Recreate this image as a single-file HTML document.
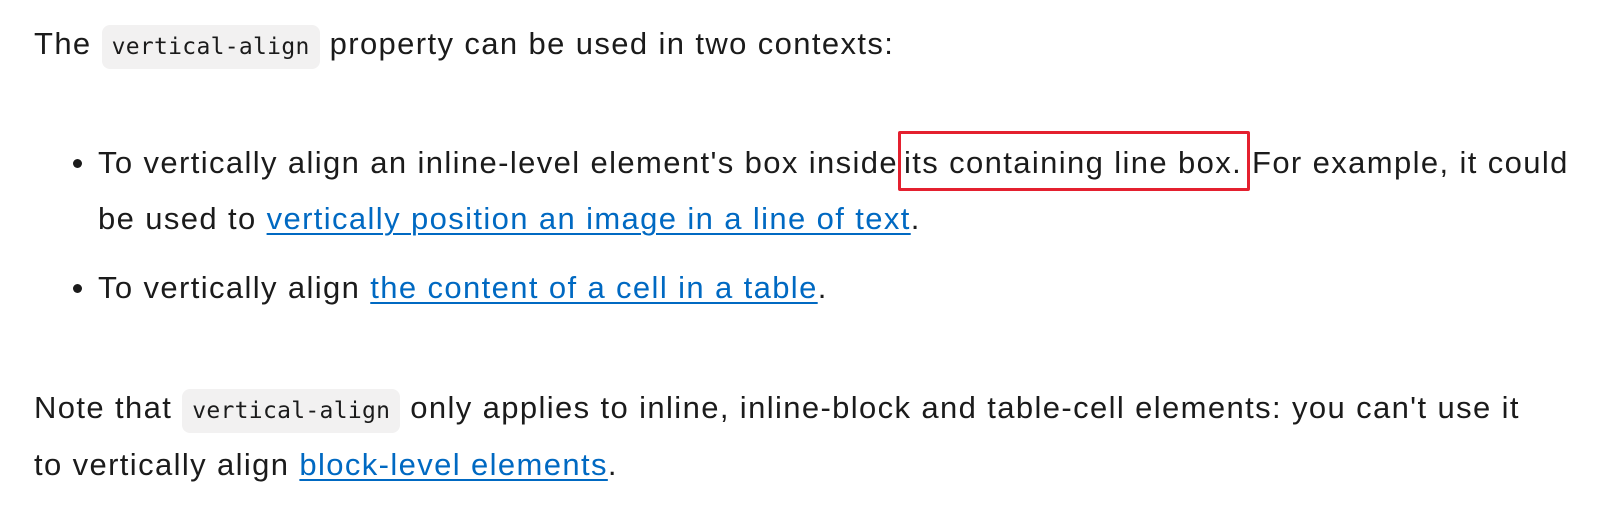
<!DOCTYPE html>
<html><head><meta charset="utf-8"><style>
body{margin:0;width:1621px;height:514px;background:#fff;position:relative;overflow:hidden;font-family:"Liberation Sans","DejaVu Sans",sans-serif;font-size:31px;letter-spacing:1.38px;color:#1b1b1b}
.t{position:absolute;white-space:nowrap;line-height:40px}
a{color:#0069c2;text-decoration:underline;text-underline-offset:4px;text-decoration-thickness:2px}
code{font-family:"DejaVu Sans Mono","Liberation Mono",monospace;font-size:23px;letter-spacing:0.3px;background:#f2f1f1;border-radius:8px;padding:9px 10px}
.dot{position:absolute;width:9px;height:9px;border-radius:50%;background:#1b1b1b}
.box{position:absolute;border:3px solid #e4202f;border-radius:2px}
</style></head><body>
<div class="t" style="left:34px;top:24px">The <code>vertical-align</code> property can be used in two contexts:</div>

<div class="dot" style="left:73px;top:159px"></div>
<div class="t" style="left:98px;top:143px">To vertically align an inline-level element's box inside</div>
<div class="box" style="left:898px;top:131px;width:346px;height:54px"></div>
<div class="t" style="left:904px;top:143px">its containing line box.</div>
<div class="t" style="left:1252px;top:143px">For example, it could</div>
<div class="t" style="left:98px;top:199px">be used to <a>vertically position an image in a line of text</a>.</div>

<div class="dot" style="left:73px;top:284px"></div>
<div class="t" style="left:98px;top:268px">To vertically align <a>the content of a cell in a table</a>.</div>

<div class="t" style="left:34px;top:388px">Note that <code>vertical-align</code> only applies to inline, inline-block and table-cell elements: you can't use it</div>
<div class="t" style="left:34px;top:445px">to vertically align <a>block-level elements</a>.</div>
</body></html>
